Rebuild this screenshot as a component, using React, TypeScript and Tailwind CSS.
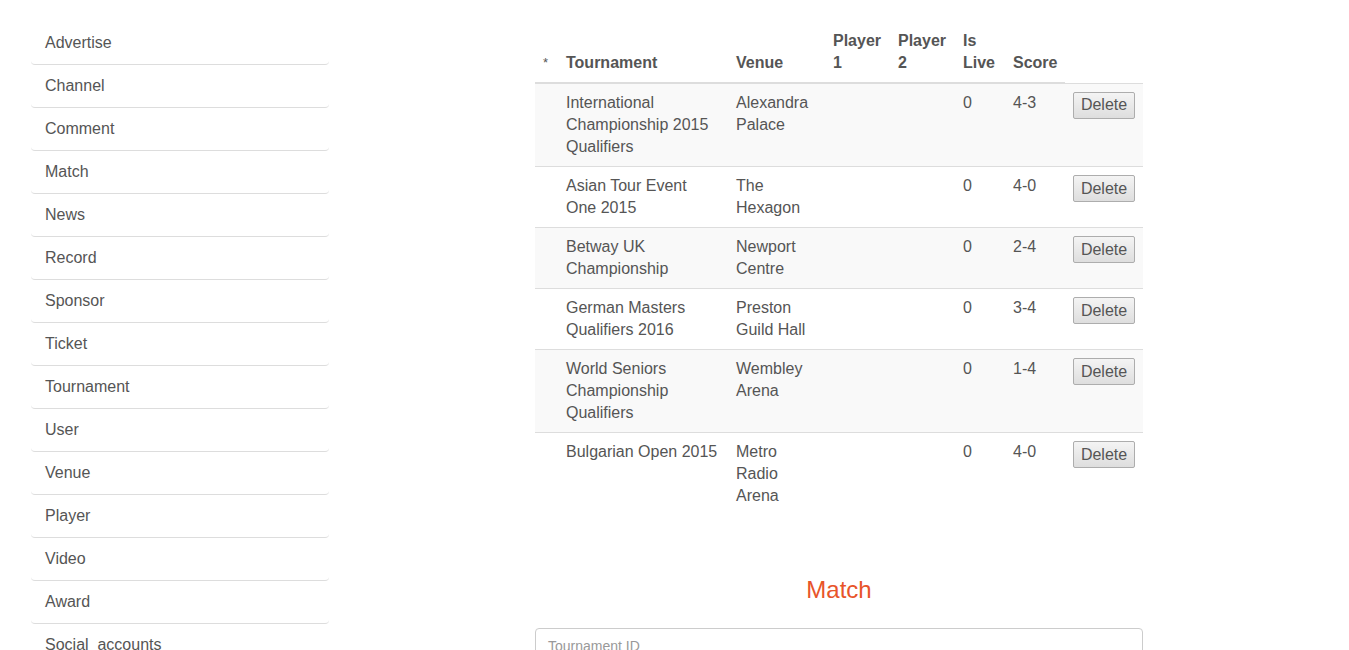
const navItems = [
  "Advertise",
  "Channel",
  "Comment",
  "Match",
  "News",
  "Record",
  "Sponsor",
  "Ticket",
  "Tournament",
  "User",
  "Venue",
  "Player",
  "Video",
  "Award",
  "Social  accounts",
];

type MatchRow = {
  tournament: string;
  venue: string;
  player1: string;
  player2: string;
  isLive: number;
  score: string;
};

const matches: MatchRow[] = [
  { tournament: "International Championship 2015 Qualifiers", venue: "Alexandra Palace", player1: "", player2: "", isLive: 0, score: "4-3" },
  { tournament: "Asian Tour Event One 2015", venue: "The Hexagon", player1: "", player2: "", isLive: 0, score: "4-0" },
  { tournament: "Betway UK Championship", venue: "Newport Centre", player1: "", player2: "", isLive: 0, score: "2-4" },
  { tournament: "German Masters Qualifiers 2016", venue: "Preston Guild Hall", player1: "", player2: "", isLive: 0, score: "3-4" },
  { tournament: "World Seniors Championship Qualifiers", venue: "Wembley Arena", player1: "", player2: "", isLive: 0, score: "1-4" },
  { tournament: "Bulgarian Open 2015", venue: "Metro Radio Arena", player1: "", player2: "", isLive: 0, score: "4-0" },
];

export default function App() {
  return (
    <div
      className="flex min-h-screen bg-white text-[16px] leading-[22px] text-[#555]"
      style={{ fontFamily: '"Liberation Sans", Arial, sans-serif' }}
    >
      <div className="ml-[31px] mt-[22px] w-[298px] shrink-0">
        {navItems.map((item) => (
          <div key={item} className="whitespace-pre rounded border-b border-[#ddd] px-[14px] py-[10px]">
            {item}
          </div>
        ))}
      </div>

      <div className="ml-[206px] mt-[22px] w-[608px] shrink-0">
        <table className="w-full table-fixed border-collapse">
          <colgroup>
            <col className="w-[23px]" />
            <col className="w-[170px]" />
            <col className="w-[97px]" />
            <col className="w-[65px]" />
            <col className="w-[65px]" />
            <col className="w-[50px]" />
            <col className="w-[60px]" />
            <col className="w-[78px]" />
          </colgroup>
          <thead>
            <tr>
              <th className="border-b-2 border-[#ddd] p-2 text-left align-bottom text-[13px] font-normal">*</th>
              <th className="border-b-2 border-[#ddd] p-2 text-left align-bottom font-bold">Tournament</th>
              <th className="border-b-2 border-[#ddd] p-2 text-left align-bottom font-bold">Venue</th>
              <th className="border-b-2 border-[#ddd] p-2 text-left align-bottom font-bold">Player 1</th>
              <th className="border-b-2 border-[#ddd] p-2 text-left align-bottom font-bold">Player 2</th>
              <th className="border-b-2 border-[#ddd] p-2 text-left align-bottom font-bold">Is Live</th>
              <th className="border-b-2 border-[#ddd] p-2 text-left align-bottom font-bold">Score</th>
            </tr>
          </thead>
          <tbody>
            {matches.map((m, i) => (
              <tr key={i} className={i % 2 === 0 ? "bg-[#f9f9f9]" : "bg-white"}>
                <td className="border-t border-[#ddd] p-2 align-top"></td>
                <td className="border-t border-[#ddd] p-2 align-top">{m.tournament}</td>
                <td className="border-t border-[#ddd] p-2 align-top">{m.venue}</td>
                <td className="border-t border-[#ddd] p-2 align-top">{m.player1}</td>
                <td className="border-t border-[#ddd] p-2 align-top">{m.player2}</td>
                <td className="border-t border-[#ddd] p-2 align-top">{m.isLive}</td>
                <td className="border-t border-[#ddd] p-2 align-top">{m.score}</td>
                <td className="border-t border-[#ddd] p-2 align-top">
                  <button className="h-[27px] w-[62px] rounded-[2px] border border-[#adadad] bg-gradient-to-b from-[#f4f4f4] to-[#dedede] text-[16px] leading-[22px] text-[#555]">
                    Delete
                  </button>
                </td>
              </tr>
            ))}
          </tbody>
        </table>

        <h2 className="mt-[62px] text-center text-[24px] leading-[26px] text-[#e8542a]">Match</h2>

        <div className="mt-[25px] h-[40px] rounded border border-[#ccc] px-3 pt-[6px] text-[14px] text-[#999]">
          Tournament ID
        </div>
      </div>
    </div>
  );
}
